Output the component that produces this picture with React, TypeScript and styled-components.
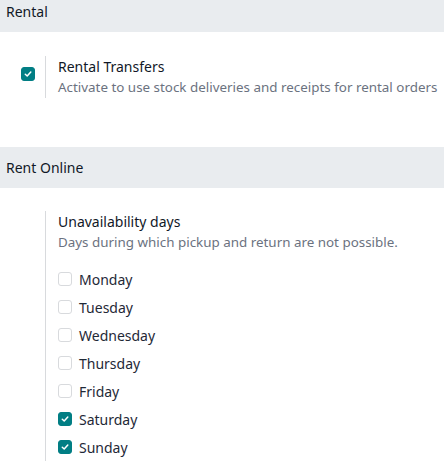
import styled, { createGlobalStyle } from "styled-components";

const GlobalStyle = createGlobalStyle`
    body {
        margin: 0;
        background: #ffffff;
        font-family: "Noto Sans", "DejaVu Sans", sans-serif;
        color: #1f2328;
    }
`;

const Page = styled.div`
    width: 444px;
    height: 463px;
    overflow: hidden;
`;

const SectionHeader = styled.div<{ $cut?: number }>`
    height: 41px;
    margin-top: ${({ $cut }) => ($cut ? -$cut : 0)}px;
    display: flex;
    align-items: center;
    padding-left: 6px;
    background: #e9ecef;
    font-size: 14px;
    color: #111827;
`;

const SettingsBlock = styled.div<{ $top: number; $bottom: number }>`
    padding: ${({ $top }) => $top}px 0 ${({ $bottom }) => $bottom}px;
`;

const Setting = styled.div`
    display: flex;
`;

const LeftPane = styled.div`
    width: 21px;
    padding-left: 21px;
    padding-top: 5px;
    margin-right: 3px;
`;

const RightPane = styled.div`
    flex: 1;
    border-left: 1px solid #d8dadd;
    padding-left: 12px;
`;

const Title = styled.div`
    font-size: 14px;
    line-height: 21px;
    color: #111827;
`;

const Description = styled.div`
    font-size: 13.4px;
    line-height: 21px;
    color: #6b7280;
    white-space: nowrap;
`;

const Box = styled.span<{ $checked?: boolean }>`
    width: 14px;
    height: 14px;
    box-sizing: border-box;
    border-radius: 3px;
    display: inline-flex;
    align-items: center;
    justify-content: center;
    flex-shrink: 0;
    background: ${({ $checked }) => ($checked ? "#017e84" : "#ffffff")};
    border: 1px solid ${({ $checked }) => ($checked ? "#017e84" : "#d8dadd")};
`;

const DayList = styled.div`
    display: flex;
    flex-direction: column;
    padding-top: 12px;
`;

const DayRow = styled.label`
    height: 28px;
    display: flex;
    align-items: center;
    gap: 7px;
    font-size: 14px;
    color: #1f2937;
`;

const Check = ({ checked }: { checked?: boolean }) => (
    <Box $checked={checked}>
        {checked && (
            <svg width="8" height="8" viewBox="0 0 8 8">
                <path
                    d="M1.3 4.2 L3.2 6 L6.8 2"
                    fill="none"
                    stroke="#ffffff"
                    strokeWidth="1.5"
                    strokeLinecap="round"
                    strokeLinejoin="round"
                />
            </svg>
        )}
    </Box>
);

const days = [
    { name: "Monday", checked: false },
    { name: "Tuesday", checked: false },
    { name: "Wednesday", checked: false },
    { name: "Thursday", checked: false },
    { name: "Friday", checked: false },
    { name: "Saturday", checked: true },
    { name: "Sunday", checked: true },
];

export default function App() {
    return (
        <Page>
            <GlobalStyle />
            <SectionHeader $cut={9}>Rental</SectionHeader>
            <SettingsBlock $top={24} $bottom={49}>
                <Setting>
                    <LeftPane>
                        <Check checked />
                    </LeftPane>
                    <RightPane>
                        <Title>Rental Transfers</Title>
                        <Description>
                            Activate to use stock deliveries and receipts for
                            rental orders
                        </Description>
                    </RightPane>
                </Setting>
            </SettingsBlock>
            <SectionHeader>Rent Online</SectionHeader>
            <SettingsBlock $top={23} $bottom={0}>
                <Setting>
                    <LeftPane />
                    <RightPane>
                        <Title>Unavailability days</Title>
                        <Description>
                            Days during which pickup and return are not
                            possible.
                        </Description>
                        <DayList>
                            {days.map((day) => (
                                <DayRow key={day.name}>
                                    <Check checked={day.checked} />
                                    {day.name}
                                </DayRow>
                            ))}
                        </DayList>
                    </RightPane>
                </Setting>
            </SettingsBlock>
        </Page>
    );
}
